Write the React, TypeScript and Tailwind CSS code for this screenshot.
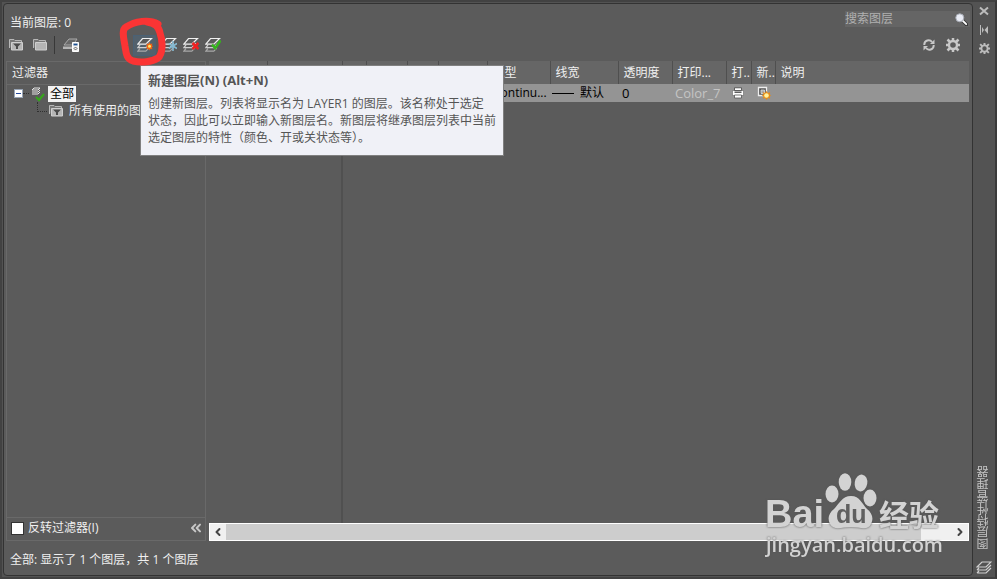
import React from 'react';
import { ChevronLeft, ChevronRight, ChevronsLeft } from 'lucide-react';

interface IconProps {
  className?: string;
}

const columns = [
  { label: '', width: 'w-[58px]' },
  { label: '', width: 'w-[75px]' },
  { label: '', width: 'w-[24px]' },
  { label: '', width: 'w-[41px]' },
  { label: '', width: 'w-[31px]' },
  { label: '', width: 'w-[49px]' },
  { label: '线型', width: 'w-[63px]' },
  { label: '线宽', width: 'w-[68px]' },
  { label: '透明度', width: 'w-[54px]' },
  { label: '打印...', width: 'w-[54px]' },
  { label: '打..', width: 'w-[25px]' },
  { label: '新..', width: 'w-[24px]' },
  { label: '说明', width: '' },
];

const FolderIcon: React.FC<IconProps & { filter?: boolean }> = ({ className, filter }) => (
  <svg viewBox="0 0 14 14" className={className} aria-hidden="true">
    <path d="M.5 10V1.500H5L6 2.500h6.500V4" fill="#777" stroke="#b8b8b8" />
    <path d="M2.500 4.500H13.500V12H2.500Z" fill="#b5b5b5" stroke="#cfcfcf" />
    {filter && <path d="M4 5.500h8L9 8.500V11H7V8.500Z" fill="#4a4a4a" />}
  </svg>
);

// Stack of three sheets shared by every layer command
const Sheets = () => (
  <g fill="none" strokeWidth="1.2">
    <path d="M3 11.500L.8 14.200h8l3-3" stroke="#a8a8a8" />
    <path d="M3 8L.8 10.700h8l4-4.500" stroke="#d0d0d0" />
    <path d="M.8 7.200L5.500 1.500h9L8.800 7.200Z" fill="#5b5b5b" stroke="#f0f0f0" />
  </g>
);

const LayerIcon: React.FC<{ kind: 'new' | 'frozen' | 'delete' | 'current' | 'states' }> = ({ kind }) => (
  <svg viewBox="0 0 16 16" className="size-4" aria-hidden="true">
    {kind === 'states' ? (
      <g>
        <path d="M1 8L6 2h8L10 8Z" fill="#686868" stroke="#aaa" />
        <path d="M0 9.500h9v2.500H0Z" fill="#b5b5b5" />
        <path d="M9.500 5.500h6v9h-6Z" fill="#f1f1f1" stroke="#fff" />
        <path d="M10.500 7.500h4" stroke="#1b4f91" strokeWidth="1.800" />
        <path d="M11 11.500l1.500-1.500L14 11.500l-1.500 1.500Z" fill="none" stroke="#444" strokeWidth=".8" />
      </g>
    ) : (
      <Sheets />
    )}
    {kind === 'new' && (
      <g>
        <path d="M12.500 5l1 2 2-.5-.6 1.800 1.100 1-1.200 1 .6 2-2-.4-.9 1.600-1-1.600-2 .4.500-2-1-1 1-1-.5-1.800 2 .5Z" fill="#ef6514" />
        <circle cx="12.500" cy="9.200" r="1.500" fill="#ffe96b" />
      </g>
    )}
    {kind === 'frozen' && (
      <path d="M12 4v10M7.800 6.500l8.200 5M16 6.500l-8.200 5" stroke="#86bad2" strokeWidth="1.600" />
    )}
    {kind === 'delete' && <path d="M9.500 6l6 6M15.500 6l-6 6" stroke="#ef2020" strokeWidth="2.600" />}
    {kind === 'current' && <path d="M7 7.500l3.200 3.700L15.500 3.500" fill="none" stroke="#35b51c" strokeWidth="2.500" />}
  </svg>
);

const GearIcon: React.FC<IconProps> = ({ className }) => (
  <svg viewBox="0 0 14 14" className={className} aria-hidden="true" fill="none" stroke="currentColor">
    <circle cx="7" cy="7" r="4" strokeWidth="2.400" />
    <path
      d="M7 0v3M7 11v3M0 7h3M11 7h3M1.500 1.500l2.500 2.500M10 10l2.500 2.500M12.500 1.500L10 4M4 10l-2.500 2.500"
      strokeWidth="2.500"
    />
  </svg>
);

const RefreshIcon = () => (
  <svg viewBox="0 0 12 12" className="size-3" aria-hidden="true" fill="none" stroke="#c8c8c8" strokeWidth="2">
    <path d="M1.300 6V5.500A4.300 4.300 0 0 1 9 3M10.700 6v.5A4.300 4.300 0 0 1 3 9" />
    <path d="M11.500.5V5H7Z" fill="#c8c8c8" stroke="none" />
    <path d="M.5 11.500V7H5Z" fill="#c8c8c8" stroke="none" />
  </svg>
);

const SearchIcon = () => (
  <svg viewBox="0 0 13 13" className="size-[13px]" aria-hidden="true">
    <path d="M7.500 7.500l4 4" stroke="#333" strokeWidth="3.400" strokeLinecap="round" />
    <path d="M7.500 7.500l3.700 3.700" stroke="#fff" strokeWidth="1.800" strokeLinecap="round" />
    <circle cx="4.800" cy="4.800" r="4" fill="#e9ecf5" stroke="#a7abb5" />
  </svg>
);

const PrinterIcon = () => (
  <svg viewBox="0 0 12 12" className="size-3" aria-hidden="true">
    <path d="M.5 3.500h11v5H.5Z" fill="#fff" stroke="#666" strokeWidth=".6" />
    <path d="M2.500.8h7v2.700h-7Z" fill="#fff" stroke="#444" strokeWidth=".8" />
    <path d="M2.500 5.200h7" stroke="#444" strokeWidth="1.300" />
    <path d="M2.500 8h7v3h-7Z" fill="#fff" stroke="#555" strokeWidth=".8" />
  </svg>
);

const ViewportIcon = () => (
  <svg viewBox="0 0 14 14" className="size-[14px]" aria-hidden="true">
    <path d="M1.500 1.500h8v8h-8Z" fill="#555" stroke="#eee" strokeWidth="1.300" />
    <path d="M4 4h3.500v3.500H4Z" fill="#a8a8a8" stroke="#ddd" strokeWidth=".8" />
    <path d="M9.500 5l1.400 2 2.300-.8-.6 2.300 1.400 1-1.400 1 .6 2.300-2.300-.8-1.400 2-1.400-2-2.300.8.800-2.300-1.800-1 1.800-1-.8-2.300 2.300.8Z" fill="#ec8a12" />
    <circle cx="9.500" cy="9.500" r="2.300" fill="#fff2a0" />
  </svg>
);

const FilterTree = () => (
  <ul>
    <li>
      <div className="flex h-[17px] items-center pl-[7px]">
        <button aria-label="折叠" className="grid size-[9px] place-items-center border border-[#98a4b5] bg-white">
          <span className="h-px w-[5px] bg-[#24499b]" />
        </button>
        <span className="w-[6px] border-t border-dotted border-[#303030]" />
        <svg viewBox="0 0 14 16" className="ml-[2px] mt-[2px] h-4 w-[14px]" aria-hidden="true">
          <path d="M1 3l2-2h6L7 3ZM1 5h6l2-2M1 7h6l2-2" fill="none" stroke="#e5e5e5" />
          <path d="M5 10l3 3 5-6" fill="none" stroke="#35a51c" strokeWidth="2.200" />
        </svg>
        <span className="ml-[3px] bg-[#f3f3f3] px-[2px] leading-4 text-black">全部</span>
      </div>
      <ul>
        <li className="flex h-[17px] items-center pl-[30px]">
          <span className="mb-2 h-[10px] w-[10px] border-b border-l border-dotted border-[#303030]" />
          <FolderIcon filter className="ml-[2px] size-[14px]" />
          <span className="ml-[6px] whitespace-nowrap">所有使用的图层</span>
        </li>
      </ul>
    </li>
  </ul>
);

const LayerTable = () => (
  <table className="w-full table-fixed border-collapse">
    <colgroup>
      {columns.map((column, i) => (
        <col key={i} className={column.width} />
      ))}
    </colgroup>
    <thead>
      <tr className="h-[23px] bg-[#666]">
        {columns.map((column, i) => (
          <th
            key={i}
            className="overflow-hidden whitespace-nowrap border-r border-[#4f4f4f] p-0 pl-[5px] text-left font-normal last:border-r-0"
          >
            {column.label}
          </th>
        ))}
      </tr>
    </thead>
    <tbody>
      <tr className="h-[18px] bg-[#949494] text-[13px] leading-4 text-black">
        <td colSpan={6} className="p-0" />
        <td className="whitespace-nowrap p-0 pl-[6px] text-xs">Continu...</td>
        <td className="p-0">
          <div className="flex items-center gap-[6px] pl-[2px] text-xs">
            <span className="h-px w-[22px] bg-black" />
            默认
          </div>
        </td>
        <td className="p-0 pl-1">0</td>
        <td className="p-0 pl-[3px] text-[#c4c4c4]">Color_7</td>
        <td className="p-0 pl-[6px]">
          <PrinterIcon />
        </td>
        <td className="p-0 pl-[6px]">
          <ViewportIcon />
        </td>
        <td className="p-0" />
      </tr>
    </tbody>
  </table>
);

const Tooltip = () => (
  <div
    role="tooltip"
    className="absolute left-[138px] top-[63px] z-10 w-[364px] border border-[#808080] bg-[#f0f1f7] px-[7px] pb-[9px] pt-[5px] text-[#555]"
  >
    <h2 className="text-[13px] font-bold leading-[18px]">新建图层(N) (Alt+N)</h2>
    <p className="mt-[6px] whitespace-nowrap leading-[17px]">
      创建新图层。列表将显示名为 LAYER1 的图层。该名称处于选定
      <br />
      状态，因此可以立即输入新图层名。新图层将继承图层列表中当前
      <br />
      选定图层的特性（颜色、开或关状态等）。
    </p>
  </div>
);

const Marker = () => (
  <svg viewBox="0 0 50 50" className="pointer-events-none absolute left-[115px] top-[14px] z-20 size-[50px]" aria-hidden="true">
    <path
      d="M41 8C32 3 18 5 9 11C4 14 7 23 8 30C9 36 9 43 16 45C24 47 35 46 41 42C46 38 46 25 43 17C42 11 38 7 30 6"
      fill="none"
      stroke="#fb3434"
      strokeWidth="7"
      strokeLinecap="round"
      strokeLinejoin="round"
    />
  </svg>
);

const Watermark = () => (
  <svg
    viewBox="0 0 184 88"
    className="pointer-events-none absolute bottom-[16px] right-[46px] z-10 h-[88px] w-[184px] fill-[#d3d3d3] drop-shadow-[0_0_1px_#555]"
  >
    <text x="0" y="54" className="font-['Liberation_Sans'] text-[38px] font-bold">Bai</text>
    <ellipse cx="67" cy="21" rx="6.500" ry="8.500" />
    <ellipse cx="80" cy="9" rx="6.300" ry="8.800" />
    <ellipse cx="96" cy="10" rx="6.300" ry="8.500" transform="rotate(10 96 10)" />
    <ellipse cx="105" cy="25" rx="6.500" ry="8.500" />
    <path d="M86 23c-9 0-12 8-17 13-5 4-7 9-4 15 4 7 12 3 21 3s17 4 20-3c3-6 1-11-4-15-5-5-7-13-16-13Z" />
    <text x="71" y="50" className="fill-[#606060] font-['Liberation_Sans'] text-[25px] font-bold">du</text>
    <text x="114" y="53" className="font-['Noto_Sans_CJK_SC'] text-[30px] font-bold">经验</text>
    <text x="1" y="79" className="font-['Open_Sans'] text-[20px] font-semibold">jingyan.baidu.com</text>
  </svg>
);

const App: React.FC = () => {
  return (
    <div className="relative flex h-screen overflow-hidden border-2 border-[#424242] border-r-[#3a3a3a] bg-[#535353] pb-px pl-px pt-px font-['Open_Sans','Noto_Sans_CJK_SC',sans-serif] text-xs text-[#f0f0f0]">
      <main className="flex min-w-0 flex-1 flex-col rounded border border-[#333] bg-[#5b5b5b] pl-[2px]">
        <header className="flex h-7 shrink-0 items-start justify-between pl-1 pt-[7px]">
          <h1 className="leading-6">当前图层: 0</h1>
          <label className="mr-[2px] flex h-4 w-[125px] items-center bg-[#656565] pr-[2px]">
            <input
              aria-label="搜索图层"
              placeholder="搜索图层"
              className="min-w-0 flex-1 bg-transparent leading-4 outline-none placeholder:text-[#b0b0b0]"
            />
            <SearchIcon />
          </label>
        </header>

        <div className="mb-[3px] flex h-[26px] shrink-0 items-center">
          <button aria-label="新建特性过滤器" className="ml-[3px]">
            <FolderIcon filter className="size-[14px]" />
          </button>
          <button aria-label="新建组过滤器" className="ml-[10px]">
            <FolderIcon className="size-[14px]" />
          </button>
          <span className="ml-[7px] h-[18px] w-px bg-[#383838]" />
          <button aria-label="图层状态管理器" className="ml-2">
            <LayerIcon kind="states" />
          </button>
          <button
            aria-label="新建图层"
            className="ml-[54px] grid h-[21px] w-[23px] place-items-center border border-[#4a6175] bg-[#53616c]"
          >
            <LayerIcon kind="new" />
          </button>
          <div className="ml-[5px] flex gap-[6px]">
            <button aria-label="新建冻结图层">
              <LayerIcon kind="frozen" />
            </button>
            <button aria-label="删除图层">
              <LayerIcon kind="delete" />
            </button>
            <button aria-label="置为当前">
              <LayerIcon kind="current" />
            </button>
          </div>
          <div className="ml-auto mr-3 flex items-center gap-[11px]">
            <button aria-label="刷新">
              <RefreshIcon />
            </button>
            <button aria-label="设置" className="text-[#c8c8c8]">
              <GearIcon className="size-[14px]" />
            </button>
          </div>
        </div>

        <div className="flex min-h-0 flex-1 gap-[3px]">
          <aside className="flex w-[200px] shrink-0 flex-col border border-[#696969]">
            <h2 className="h-[23px] shrink-0 border-b border-[#696969] pl-[5px] leading-[22px]">过滤器</h2>
            <div className="flex-1 overflow-hidden">
              <FilterTree />
            </div>
            <div className="flex h-[23px] shrink-0 items-start justify-between border-t border-[#696969] pl-1 pr-px pt-[2px]">
              <label className="flex items-center gap-1">
                <input type="checkbox" className="size-[13px] appearance-none border border-[#333] bg-white" />
                反转过滤器(I)
              </label>
              <button aria-label="折叠过滤器" className="text-[#c8c8c8]">
                <ChevronsLeft className="size-4" strokeWidth={3} />
              </button>
            </div>
          </aside>

          <section className="mr-[3px] flex min-w-0 flex-1 flex-col">
            <LayerTable />
            {/* frozen column divider */}
            <div className="w-[134px] flex-1 border-r-2 border-[#505050]" />
            <div className="flex h-[18px] shrink-0 items-center border border-white bg-[#f0f0f0] text-[#444]">
              <button aria-label="向左滚动" className="grid w-4 place-items-center">
                <ChevronLeft className="size-3" strokeWidth={4} />
              </button>
              <span className="h-full w-[695px] shrink bg-[#cdcdcd]" />
              <button aria-label="向右滚动" className="ml-auto grid w-4 place-items-center">
                <ChevronRight className="size-3" strokeWidth={4} />
              </button>
            </div>
          </section>
        </div>

        <footer className="h-[34px] shrink-0 pl-1 leading-[38px]">全部: 显示了 1 个图层，共 1 个图层</footer>
      </main>

      <div className="flex w-[22px] shrink-0 flex-col items-center pt-[3px] text-[#bcbcbc]">
        <button aria-label="关闭" className="mb-[9px]">
          <svg viewBox="0 0 10 10" className="size-[10px]" stroke="currentColor" strokeWidth="2">
            <path d="M1 1.500l8 7M9 1.500l-8 7" />
          </svg>
        </button>
        <button aria-label="自动隐藏" className="mb-2">
          <svg viewBox="0 0 10 10" className="size-[10px]" fill="currentColor">
            <path d="M1 0h1v10H1ZM3 2l2 3-2 3ZM9 1v8L5.500 5Z" />
          </svg>
        </button>
        <button aria-label="特性">
          <GearIcon className="size-[11px]" />
        </button>
        <h2 className="mb-[11px] mt-auto rotate-180 leading-3 text-[#c4c4c4] [writing-mode:vertical-rl]">
          图层特性管理器
        </h2>
        <svg viewBox="0 0 16 14" className="mb-px h-[14px] w-4" aria-hidden="true" fill="none" stroke="#d0d0d0" strokeWidth="1.200">
          <path d="M1 6l5-5h9l-5 5ZM1 9h9l5-5M1 9l2-2M1 12h9l5-5M1 12l2-2" />
        </svg>
      </div>

      <Tooltip />
      <Marker />
      <Watermark />
    </div>
  );
};

export default App;
